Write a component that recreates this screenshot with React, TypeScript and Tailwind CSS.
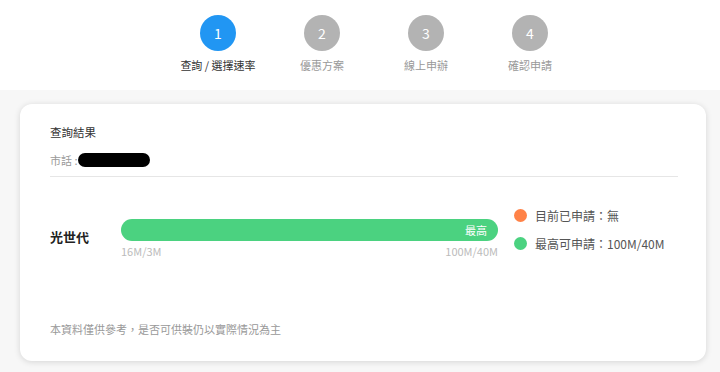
import React from "react";

const font = { fontFamily: '"Noto Sans CJK TC", "Noto Sans", sans-serif' };

const steps = [
  { n: "1", label: "查詢 / 選擇速率", active: true },
  { n: "2", label: "優惠方案", active: false },
  { n: "3", label: "線上申辦", active: false },
  { n: "4", label: "確認申請", active: false },
];

export default function App() {
  return (
    <div className="w-[720px] h-[372px] bg-[#f7f7f7] overflow-hidden" style={font}>
      <div className="h-[90px] bg-white flex pl-[166px] pt-[15px]">
        {steps.map((s) => (
          <div key={s.n} className="w-[104px] flex flex-col items-center">
            <div
              className={`w-[36px] h-[36px] rounded-full flex items-center justify-center text-white text-[14px] ${
                s.active ? "bg-[#2196f3]" : "bg-[#b3b3b3]"
              }`}
            >
              {s.n}
            </div>
            <div
              className={`mt-[6px] text-[11px] leading-[16px] whitespace-nowrap ${
                s.active ? "text-[#333]" : "text-[#999]"
              }`}
            >
              {s.label}
            </div>
          </div>
        ))}
      </div>
      <div className="ml-[20px] w-[686px] mt-[14px] h-[257px] bg-white rounded-[12px] shadow-[0_1px_6px_rgba(0,0,0,0.14)] pl-[30px] pr-[28px]">
        <div className="pt-[20px]">
          <div className="text-[11.5px] leading-[16px] text-[#333]">查詢結果</div>
          <div className="mt-[12px] flex items-center h-[16px] text-[11px] text-[#999]">
            <span>市話 :</span>
            <span className="ml-0 w-[72px] h-[14px] rounded-full bg-black inline-block" />
          </div>
          <div className="mt-[8px] h-px bg-[#e6e6e6]" />
        </div>
        <div className="flex items-start mt-[42px]">
          <div className="w-[71px] pt-[9px] text-[13px] font-bold text-[#222] leading-[18px]">光世代</div>
          <div className="w-[377px]">
            <div className="h-[22px] rounded-full bg-[#4bd280] flex items-center justify-end pr-[11px] text-white text-[11px]">
              最高
            </div>
            <div className="flex justify-between mt-[3px] text-[11px] leading-[14px] text-[#bbb]">
              <span>16M/3M</span>
              <span>100M/40M</span>
            </div>
          </div>
          <div className="ml-[16px] mt-[-11px] flex flex-col gap-[13px]">
            <div className="flex items-center h-[15px]">
              <span className="w-[13px] h-[13px] rounded-full bg-[#ff8247]" />
              <span className="ml-[8px] text-[12px] text-[#555]">目前已申請：無</span>
            </div>
            <div className="flex items-center h-[15px]">
              <span className="w-[13px] h-[13px] rounded-full bg-[#4bd280]" />
              <span className="ml-[8px] text-[12px] text-[#555]">最高可申請：100M/40M</span>
            </div>
          </div>
        </div>
        <div className="mt-[64px] text-[11px] text-[#999] leading-[14px]">
          本資料僅供參考，是否可供裝仍以實際情況為主
        </div>
      </div>
    </div>
  );
}
